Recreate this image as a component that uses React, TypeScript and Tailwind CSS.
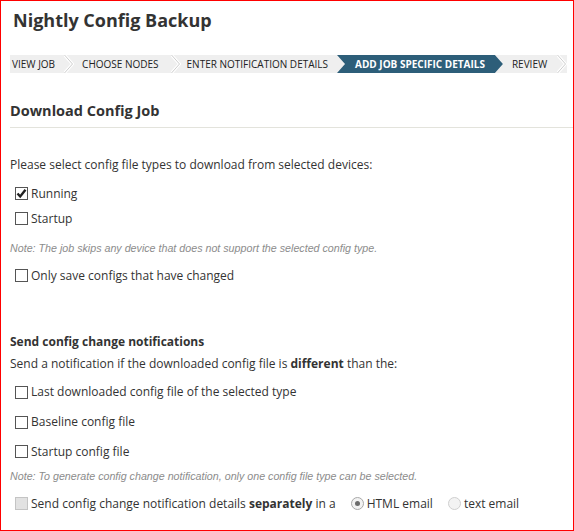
import React from "react";

function Box({ checked, disabled }: { checked?: boolean; disabled?: boolean }) {
  return (
    <span
      className={
        "mr-[3px] inline-flex h-[13px] w-[13px] shrink-0 items-center justify-center border " +
        (disabled ? "border-[#c4c4c4] bg-[#e2e2e2]" : "border-[#555] bg-white")
      }
    >
      {checked && (
        <svg width="11" height="11" viewBox="0 0 11 11">
          <path d="M1.5 5.5 L4.2 8.5 L9.5 1.8" fill="none" stroke="#222" strokeWidth="2.4" />
        </svg>
      )}
    </span>
  );
}

function Radio({ checked }: { checked?: boolean }) {
  return (
    <span
      className={
        "mr-[3px] inline-flex h-[13px] w-[13px] shrink-0 items-center justify-center rounded-full border " +
        (checked ? "border-[#a8a8a8] bg-[#f2f2f2]" : "border-[#cfcfcf] bg-[#f3f3f3]")
      }
    >
      {checked && <span className="h-[5px] w-[5px] rounded-full bg-[#6b6b6b]" />}
    </span>
  );
}

function Row({ h, children }: { h: string; children: React.ReactNode }) {
  return <div className={"flex items-center pl-[5px] " + h}>{children}</div>;
}

function Chevron() {
  return (
    <svg width="10" height="18" viewBox="0 0 10 18" className="shrink-0">
      <polyline points="0.5,0 8.5,9 0.5,18" fill="none" stroke="#ffffff" strokeWidth="3" />
      <polyline points="0.5,0 8.5,9 0.5,18" fill="none" stroke="#cdcdcd" strokeWidth="1" />
    </svg>
  );
}

export default function App() {
  return (
    <div className="h-[531px] w-[574px] overflow-hidden border border-[#ff0000] bg-white text-[#333] font-['Open_Sans',sans-serif]">
      <div className="h-[54px] pl-[12px] pt-[5px]">
        <h1 className="text-[18px] font-bold leading-[28px] text-[#333]">Nightly Config Backup</h1>
      </div>

      <div className="flex pl-[9px]">
        <div className="flex h-[18px] items-center bg-[#efefef] text-[10px] uppercase text-[#222]">
          <span className="ml-[2px] mr-[9px]">View Job</span>
          <Chevron />
          <span className="ml-[8px] mr-[12px]">Choose Nodes</span>
          <Chevron />
          <span className="ml-[6px] mr-[9px]">Enter Notification Details</span>
          <span className="flex h-[18px] items-center bg-[#2d5e79] pl-[18px] pr-[18px] font-bold text-white [clip-path:polygon(0_0,calc(100%-8px)_0,100%_50%,calc(100%-8px)_100%,0_100%,8px_50%)]">
            Add Job Specific Details
          </span>
          <span className="ml-[9px] mr-[10px]">Review</span>
          <Chevron />
        </div>
      </div>

      <div className="ml-[9px] mt-[26px] border-b border-[#e3e3dc] pb-[4px]">
        <h2 className="text-[14.5px] font-bold leading-[24px] text-[#333]">Download Config Job</h2>
      </div>

      <div className="px-[9px] text-[12px]">
        <p className="mt-[27px] leading-[20px]">Please select config file types to download from selected devices:</p>
        <div className="mt-[6px]">
          <Row h="h-[25px]">
            <Box checked />
            <span>Running</span>
          </Row>
          <Row h="h-[25px]">
            <Box />
            <span>Startup</span>
          </Row>
        </div>
        <p className="mt-[9px] font-['Liberation_Sans',Arial,sans-serif] text-[10.7px] italic leading-[16px] text-[#8c8c8c]">
          Note: The job skips any device that does not support the selected config type.
        </p>
        <div className="mt-[7px]">
          <Row h="h-[25px]">
            <Box />
            <span>Only save configs that have changed</span>
          </Row>
        </div>

        <h3 className="mt-[44px] text-[12px] font-bold leading-[20px]">Send config change notifications</h3>
        <p className="mt-[2px] leading-[20px]">
          Send a notification if the downloaded config file is <b>different</b> than the:
        </p>
        <div className="mt-[3px]">
          <Row h="h-[30px]">
            <Box />
            <span>Last downloaded config file of the selected type</span>
          </Row>
          <Row h="h-[30px]">
            <Box />
            <span>Baseline config file</span>
          </Row>
          <Row h="h-[29px]">
            <Box />
            <span>Startup config file</span>
          </Row>
        </div>
        <p className="mt-[2px] font-['Liberation_Sans',Arial,sans-serif] text-[10.7px] italic leading-[16px] text-[#8c8c8c]">
          Note: To generate config change notification, only one config file type can be selected.
        </p>
        <div className="mt-[7px]">
          <Row h="h-[25px]">
            <Box disabled />
            <span>
              Send config change notification details <b>separately</b> in a
            </span>
            <span className="ml-[15px] flex items-center">
              <Radio checked />
              <span>HTML email</span>
            </span>
            <span className="ml-[15px] flex items-center">
              <Radio />
              <span>text email</span>
            </span>
          </Row>
        </div>
      </div>
    </div>
  );
}
